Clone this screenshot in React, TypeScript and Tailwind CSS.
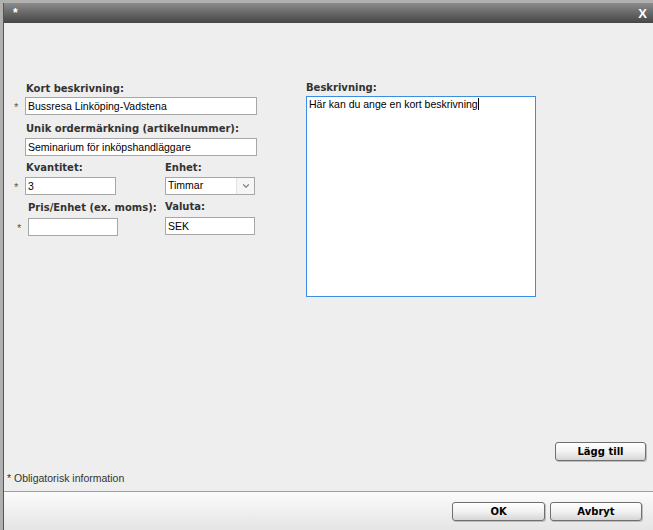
import { ChevronDown } from 'lucide-react';

const font = 'font-["Liberation_Sans",Arial,sans-serif]';
const bold = 'font-["DejaVu_Sans",Verdana,sans-serif] font-bold';

function Label({ children, className = '' }: { children: React.ReactNode; className?: string }) {
  return <div className={`h-[13px] text-[10px] leading-[13px] text-[#333] ${bold} ${className}`}>{children}</div>;
}

function Field({ value, className = '' }: { value?: string; className?: string }) {
  return (
    <div className={`h-[18px] bg-white border border-[#a7a7a7] px-[2px] text-[10.5px] leading-[16px] text-black ${className}`}>
      {value}
    </div>
  );
}

function Star() {
  return <span className="w-[11px] h-[17px] shrink-0 text-[11px] leading-[21px] text-[#555]">*</span>;
}

function Btn({ children, className = '' }: { children: React.ReactNode; className?: string }) {
  return (
    <button
      className={`h-[19px] rounded-[3px] border border-[#6f6f6f] bg-linear-to-b from-white via-[#f2f2f2] to-[#d6d6d6] text-[10px] text-black leading-[16px] shadow-[1px_1px_0_#bdbdbd] ${bold} ${className}`}
    >
      {children}
    </button>
  );
}

export default function App() {
  return (
    <div className={`w-[653px] h-[530px] bg-[#b0b0b0] pt-[3px] pl-[3px] overflow-hidden ${font}`}>
      <div className="h-[527px] border-l border-[#555] flex flex-col">
        {/* title bar */}
        <div className="h-[20px] bg-linear-to-b from-[#8c8c8c] to-[#464646] flex items-center justify-between pl-[9px] pr-[6px] text-white font-bold">
          <span className="text-[12px] leading-none">*</span>
          <span className="text-[13px] leading-none">X</span>
        </div>

        {/* body */}
        <div className="flex-1 bg-[#eeeeee] flex flex-col pt-[59px]">
          <div className="flex">
            {/* left column */}
            <div className="ml-[10px] w-[243px] flex flex-col">
              <Label className="ml-[12px]">Kort beskrivning:</Label>
              <div className="flex mt-[2px]">
                <Star />
                <Field value="Bussresa Linköping-Vadstena" className="w-[232px]" />
              </div>
              <Label className="ml-[12px] mt-[7px]">Unik ordermärkning (artikelnummer):</Label>
              <div className="flex mt-[3px] pl-[11px]">
                <Field value="Seminarium för inköpshandläggare" className="w-[232px]" />
              </div>
              <div className="flex mt-[5px]">
                <div className="w-[151px] flex flex-col">
                  <Label className="ml-[12px]">Kvantitet:</Label>
                  <div className="flex mt-[3px]">
                    <Star />
                    <Field value="3" className="w-[91px] h-[17px] leading-[15px]" />
                  </div>
                  <Label className="ml-[14px] mt-[6px]">Pris/Enhet (ex. moms):</Label>
                  <div className="flex mt-[4px] pl-[3px]">
                    <Star />
                    <Field className="w-[90px]" />
                  </div>
                </div>
                <div className="w-[90px] flex flex-col">
                  <Label>Enhet:</Label>
                  <div className="mt-[3px] h-[18px] bg-white border border-[#a7a7a7] flex items-center text-[10.5px] text-black">
                    <span className="flex-1 px-[2px]">Timmar</span>
                    <span className="w-[18px] h-full flex items-center justify-center border-l border-[#e2e2e2] bg-[#f6f6f6]">
                      <ChevronDown className="w-[10px] h-[10px] text-[#8a8a8a]" strokeWidth={3} />
                    </span>
                  </div>
                  <Label className="mt-[5px]">Valuta:</Label>
                  <div className="mt-[4px]">
                    <Field value="SEK" className="w-[90px] h-[17px] leading-[15px]" />
                  </div>
                </div>
              </div>
            </div>

            {/* right column */}
            <div className="ml-[49px] flex flex-col">
              <Label className="-mt-[1px]">Beskrivning:</Label>
              <div className="mt-[2px] w-[230px] h-[201px] bg-white border border-[#3b8ee2] px-[2px] text-[10.5px] leading-[14px] text-black">
                Här kan du ange en kort beskrivning
                <span className="inline-block w-px h-[12px] bg-black align-middle -mt-[2px]" />
              </div>
            </div>
          </div>

          <div className="mt-auto flex justify-end pr-[7px]">
            <Btn className="w-[91px]">Lägg till</Btn>
          </div>
          <div className="mt-[11px] mb-[6px] pl-[3px] text-[10.5px] leading-[13px] text-[#333]">* Obligatorisk information</div>
        </div>

        {/* footer */}
        <div className="h-[39px] border-t border-[#a0a0a0] bg-linear-to-b from-[#fbfbfb] to-[#e5e5e5] flex justify-end gap-[5px] pt-[10px] pr-[11px]">
          <Btn className="w-[93px]">OK</Btn>
          <Btn className="w-[92px]">Avbryt</Btn>
        </div>
      </div>
    </div>
  );
}
